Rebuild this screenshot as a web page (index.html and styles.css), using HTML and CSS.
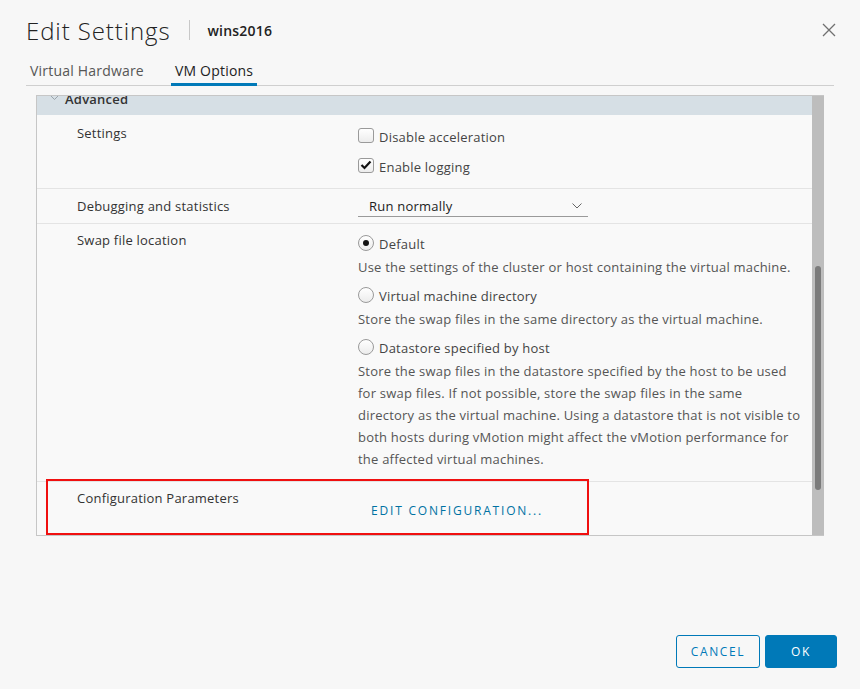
FILE: index.html
```html
<!DOCTYPE html>
<html lang="en">
<head>
    <meta charset="UTF-8">
    <meta name="viewport" content="width=device-width, initial-scale=1.0">
    <title>Edit Settings</title>
    <link rel="stylesheet" href="styles.css">
</head>
<body>
    <div class="modal">
        <header class="modal-header">
            <h1>Edit Settings</h1>
            <span class="divider"></span>
            <h2>wins2016</h2>
            <button class="close" aria-label="Close">
                <svg width="14" height="14" viewBox="0 0 14 14"><path d="M1 1 L13 13 M13 1 L1 13" stroke="#707070" stroke-width="1.3" fill="none"/></svg>
            </button>
        </header>

        <nav class="tabs">
            <button class="tab">Virtual Hardware</button>
            <button class="tab active">VM Options</button>
        </nav>

        <section class="panel">
            <div class="panel-body">
                <div class="panel-scroll">
                    <div class="section-head">
                        <svg class="caret" width="9" height="6" viewBox="0 0 9 6"><path d="M0.5 0.5 L4.5 4.5 L8.5 0.5" stroke="#9aa4ab" stroke-width="1" fill="none"/></svg>
                        <span>Advanced</span>
                    </div>

                    <div class="row">
                        <div class="label">Settings</div>
                        <div class="value checks">
                            <label class="check"><span class="box"></span>Disable acceleration</label>
                            <label class="check"><span class="box checked"><svg width="12" height="10" viewBox="0 0 12 10"><path d="M1.5 5 L4.5 8 L10.5 1.5" stroke="#111" stroke-width="2.2" fill="none"/></svg></span>Enable logging</label>
                        </div>
                    </div>

                    <div class="row">
                        <div class="label">Debugging and statistics</div>
                        <div class="value">
                            <div class="select">
                                <span>Run normally</span>
                                <svg width="10" height="6" viewBox="0 0 10 6"><path d="M0.5 0.5 L5 5 L9.5 0.5" stroke="#666" stroke-width="1" fill="none"/></svg>
                            </div>
                        </div>
                    </div>

                    <div class="row swap">
                        <div class="label">Swap file location</div>
                        <div class="value">
                            <label class="radio"><span class="circle on"></span>Default</label>
                            <p class="desc">Use the settings of the cluster or host containing the virtual machine.</p>
                            <label class="radio"><span class="circle"></span>Virtual machine directory</label>
                            <p class="desc">Store the swap files in the same directory as the virtual machine.</p>
                            <label class="radio"><span class="circle"></span>Datastore specified by host</label>
                            <p class="desc">Store the swap files in the datastore specified by the host to be used<br>for swap files. If not possible, store the swap files in the same<br>directory as the virtual machine. Using a datastore that is not visible to<br>both hosts during vMotion might affect the vMotion performance for<br>the affected virtual machines.</p>
                        </div>
                    </div>

                    <div class="row config">
                        <div class="label">Configuration Parameters</div>
                        <div class="value">
                            <button class="link-btn">Edit Configuration...</button>
                        </div>
                    </div>
                </div>
                <div class="highlight"></div>
            </div>
            <div class="scrollbar"><div class="thumb"></div></div>
        </section>

        <footer class="modal-footer">
            <button class="btn btn-outline">Cancel</button>
            <button class="btn btn-primary">OK</button>
        </footer>
    </div>
</body>
</html>
```

FILE: styles.css
```css
body {
    margin: 0;
    background: #f7f7f7;
    font-family: "Open Sans", "Noto Sans", sans-serif;
    color: #333;
    font-size: 13px;
    letter-spacing: 0.22px;
}
button {
    font-family: inherit;
}
.modal {
    height: 689px;
    box-sizing: border-box;
    padding: 0 26px 21px 26px;
    display: flex;
    flex-direction: column;
}
.modal-header {
    display: flex;
    align-items: center;
    height: 34px;
    padding-top: 13px;
    margin-bottom: 1px;
}
.modal-header h1 {
    margin: 0;
    font-size: 24px;
    font-weight: 300;
    color: #222;
    letter-spacing: 0.9px;
}
.divider {
    width: 1px;
    height: 20px;
    background: #c8c8c8;
    margin: 0 18px 0 18px;
}
.modal-header h2 {
    margin: 0;
    font-size: 14px;
    font-weight: 600;
    color: #222;
    letter-spacing: 0.2px;
}
.close {
    margin-left: auto;
    margin-right: -2px;
    border: none;
    background: none;
    padding: 0;
    width: 14px;
    height: 14px;
    display: flex;
}
.tabs {
    display: flex;
    gap: 23px;
    border-bottom: 1px solid #cfcfcf;
}
.tab {
    border: none;
    background: none;
    padding: 13px 4px 2px 4px;
    line-height: 20px;
    font-size: 14px;
    letter-spacing: 0.2px;
    color: #565656;
    border-bottom: 3px solid transparent;
    margin-bottom: -1px;
}
.tab.active {
    color: #222;
    border-bottom-color: #0079b8;
}
.panel {
    margin: 9px 10px 0 10px;
    height: 439px;
    border: 1px solid #c6c6c6;
    border-right: none;
    display: flex;
    background: #f9f9f9;
}
.panel-body {
    flex: 1;
    overflow: hidden;
    position: relative;
}
.panel-scroll {
    margin-top: -17px;
}
.section-head {
    height: 36px;
    box-sizing: border-box;
    background: #d6dfe5;
    display: flex;
    align-items: flex-end;
    padding: 0 0 6px 13px;
    line-height: 20px;
    font-size: 13px;
    font-weight: 600;
    color: #333;
}
.section-head .caret {
    margin-right: 6px;
    margin-bottom: 8px;
}
.row {
    display: grid;
    grid-template-columns: 281px 1fr;
    padding: 7px 0 6px 40px;
    border-top: 1px solid #e4e4e4;
}
.row:nth-child(2) {
    border-top: none;
    padding-top: 8px;
}
.label {
    line-height: 20px;
    color: #333;
}
.checks {
    margin-top: -1px;
}
.check, .radio {
    display: flex;
    align-items: center;
    color: #444;
}
.check {
    height: 30px;
}
.box {
    width: 14px;
    height: 13px;
    border: 1px solid #9a9a9a;
    border-radius: 3px;
    background: linear-gradient(#ffffff, #ececec);
    margin-right: 5px;
    margin-top: -4px;
    display: flex;
    align-items: center;
    justify-content: center;
}
.select {
    width: 219px;
    height: 20px;
    padding-left: 11px;
    border-bottom: 1px solid #9a9a9a;
    display: flex;
    align-items: center;
    justify-content: space-between;
    line-height: 20px;
    color: #222;
}
.select svg {
    margin-right: 6px;
}
.radio {
    height: 24px;
}
.circle {
    width: 14px;
    height: 14px;
    border: 1px solid #9a9a9a;
    border-radius: 50%;
    background: linear-gradient(#ffffff, #ececec);
    margin-right: 5px;
    margin-top: -3px;
    display: flex;
    align-items: center;
    justify-content: center;
}
.circle.on::after {
    content: "";
    width: 6px;
    height: 6px;
    border-radius: 50%;
    background: #111;
}
.desc {
    margin: 0 0 6px 0;
    line-height: 22px;
    color: #555;
    white-space: nowrap;
}
.swap {
    padding-top: 6px;
    padding-bottom: 5px;
}
.swap .value {
    margin-top: 2px;
}
.config {
    padding-top: 6px;
}
.link-btn {
    margin-top: 13px;
    margin-left: 13px;
    border: none;
    background: none;
    padding: 0;
    line-height: 20px;
    font-size: 12px;
    text-transform: uppercase;
    letter-spacing: 1.8px;
    color: #0072a3;
}
.highlight {
    position: absolute;
    left: 9px;
    top: 383px;
    width: 539px;
    height: 52px;
    border: 2px solid #f01010;
}
.scrollbar {
    width: 12px;
    background: #bdbdbd;
    position: relative;
}
.thumb {
    position: absolute;
    left: 3px;
    top: 170px;
    width: 6px;
    height: 224px;
    border-radius: 3px;
    background: #7b7b7b;
}
.modal-footer {
    margin-top: auto;
    margin-right: -3px;
    display: flex;
    justify-content: flex-end;
    gap: 5px;
}
.btn {
    height: 33px;
    border-radius: 3px;
    font-size: 12px;
    letter-spacing: 1.6px;
    text-transform: uppercase;
    padding: 0;
}
.btn-outline {
    width: 84px;
    border: 1px solid #0079b8;
    background: #f7f7f7;
    color: #0079b8;
}
.btn-primary {
    width: 72px;
    border: 1px solid #0079b8;
    background: #0079b8;
    color: #fff;
}
```
